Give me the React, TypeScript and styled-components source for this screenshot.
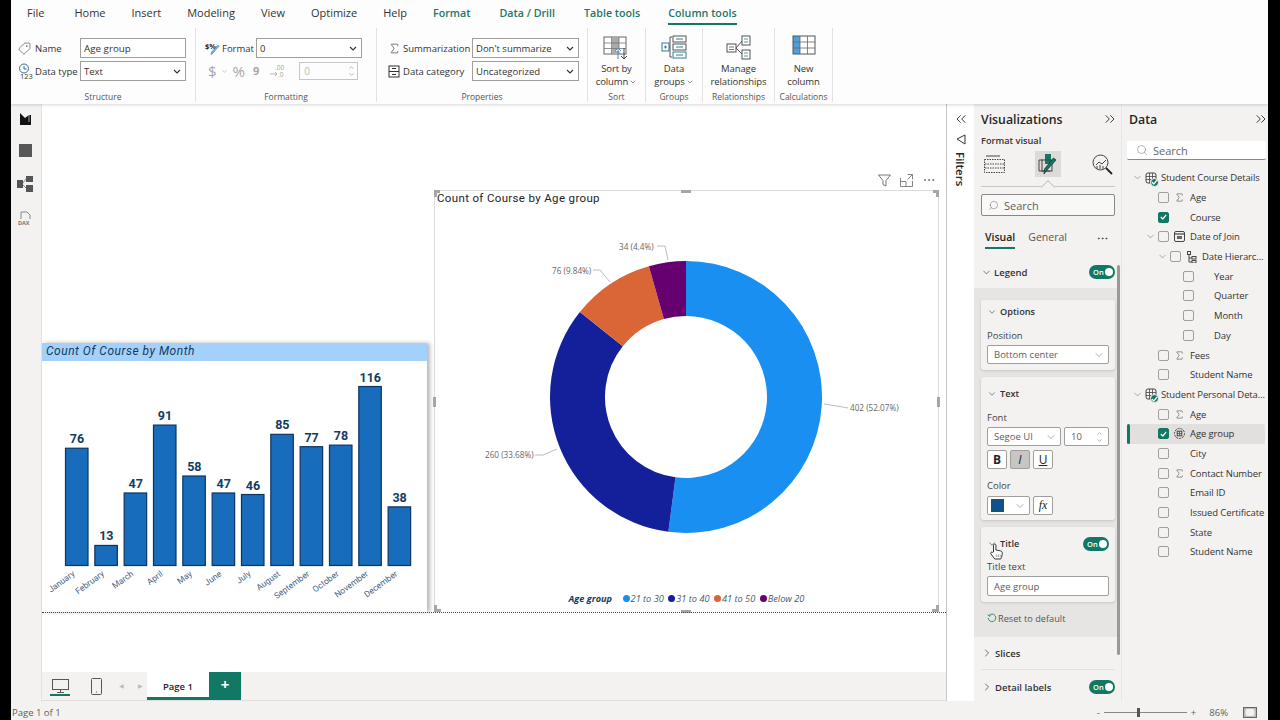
import React from 'react';
import styled, { createGlobalStyle } from 'styled-components';
import {
  ChevronDown,
  ChevronRight,
  ChevronUp,
  ChevronsLeft,
  ChevronsRight,
  Ellipsis,
  Search,
  Sigma,
  Tag,
} from 'lucide-react';

const UI_FONT = `"Open Sans", "Noto Sans", sans-serif`;
const DIN_FONT = `Roboto, "Liberation Sans", sans-serif`;
const GREEN = '#117865';

const SELECT_ARROW = `url("data:image/svg+xml,%3Csvg xmlns='http://www.w3.org/2000/svg' width='8' height='5'%3E%3Cpath d='M1 1l3 3 3-3' fill='none' stroke='%23333' stroke-width='1.1'/%3E%3C/svg%3E")`;

const GlobalStyle = createGlobalStyle`
  html, body { margin: 0; padding: 0; background: #000; }
  body { font-family: ${UI_FONT}; font-size: 10px; color: #252423; }
  * { box-sizing: border-box; }
  svg { display: block; }
`;

/* ------------------------------- Page shell ------------------------------- */

const Screen = styled.div`
  width: 1280px;
  height: 720px;
  overflow: hidden;
  background: #000;
  padding: 0 12px 0 11px;
`;

const Main = styled.div`
  height: 100%;
  display: flex;
  flex-direction: column;
  background: #f3f2f1;
`;

const Middle = styled.div`
  flex: 1;
  min-height: 0;
  display: flex;
`;

/* --------------------------------- Ribbon --------------------------------- */

const Ribbon = styled.header`
  height: 104px;
  flex: none;
  background: #fdfdfd;
  box-shadow: 0 1px 3px rgba(0, 0, 0, 0.16);
  position: relative;
  z-index: 2;
`;

const TabRow = styled.nav`
  height: 27px;
  display: flex;
  gap: 26px;
  padding-left: 16px;
  align-items: flex-start;
`;

const RibbonTab = styled.div<{ $context?: boolean; $active?: boolean; $after?: number }>`
  height: 25px;
  line-height: 26px;
  font-size: ${(p) => (p.$context ? 10.7 : 11)}px;
  color: ${(p) => (p.$context ? '#1c7767' : '#333')};
  font-weight: ${(p) => (p.$context ? 600 : 400)};
  margin-right: ${(p) => p.$after ?? 0}px;
  border-bottom: 2px solid ${(p) => (p.$active ? GREEN : 'transparent')};
`;

const GroupRow = styled.div`
  display: flex;
  height: 77px;
  padding: 1px 0 2px;
`;

const Group = styled.section<{ $width: number }>`
  width: ${(p) => p.$width}px;
  display: flex;
  flex-direction: column;
  border-right: 1px solid #e4e2e0;
`;

const GroupBody = styled.div<{ $left?: number }>`
  flex: 1;
  padding: 10px 0 0 ${(p) => p.$left ?? 0}px;
  display: flex;
  flex-direction: column;
  gap: 3px;
`;

const GroupLabel = styled.div`
  height: 14px;
  line-height: 17px;
  text-align: center;
  font-size: 8.5px;
  color: #555;
`;

const FieldRow = styled.div`
  display: flex;
  align-items: center;
  height: 20px;
`;

const IconSlot = styled.span<{ $width: number }>`
  width: ${(p) => p.$width}px;
  flex: none;
  display: flex;
  align-items: center;
`;

const FieldLabel = styled.span<{ $width: number }>`
  width: ${(p) => p.$width}px;
  flex: none;
  font-size: 9.5px;
  color: #333;
  white-space: nowrap;
`;

const RibbonInput = styled.input<{ $width: number }>`
  width: ${(p) => p.$width}px;
  height: 20px;
  border: 1px solid #a19f9d;
  padding: 0 3px;
  font: 9.8px ${UI_FONT};
  color: #333;
  background: #fff;
  outline: none;
`;

const RibbonSelect = styled.select<{ $width: number }>`
  width: ${(p) => p.$width}px;
  height: 20px;
  border: 1px solid #a19f9d;
  border-radius: 0;
  padding-left: 3px;
  font: 9.5px ${UI_FONT};
  color: #333;
  outline: none;
  appearance: none;
  background: #fff ${SELECT_ARROW} no-repeat right 4px center;
`;

const MutedGlyph = styled.span<{ $size?: number; $gap?: number; $bold?: boolean }>`
  color: #a8a6a4;
  font-size: ${(p) => p.$size ?? 14}px;
  font-weight: ${(p) => (p.$bold ? 700 : 400)};
  line-height: 18px;
  margin-right: ${(p) => p.$gap ?? 0}px;
`;

const MutedRow = styled(FieldRow)`
  padding-left: 3px;
  color: #a8a6a4;
`;

const MutedCaret = styled.span`
  margin-right: 5px;
`;

const DisabledSpin = styled.div`
  width: 59px;
  height: 18px;
  margin-left: 14px;
  border: 1px solid #c8c6c4;
  color: #bbb;
  padding-left: 4px;
  font-size: 10px;
  line-height: 16px;
  display: flex;
  justify-content: space-between;
`;

const SpinArrows = styled.span`
  display: flex;
  flex-direction: column;
  justify-content: center;
  padding-right: 2px;
  color: #888;
`;

const BigButton = styled.div`
  flex: 1;
  display: flex;
  flex-direction: column;
  align-items: center;
  padding-top: 7px;
  font-size: 9.5px;
  letter-spacing: -0.1px;
  line-height: 13px;
  color: #333;
  text-align: center;
`;

const BigIcon = styled.div`
  height: 24px;
  margin-bottom: 3px;
`;

const BigLine = styled.span`
  display: flex;
  align-items: center;
  gap: 1px;
  white-space: nowrap;
`;

/* -------------------------------- Left rail ------------------------------- */

const Rail = styled.aside`
  width: 31px;
  flex: none;
  display: flex;
  flex-direction: column;
  align-items: center;
  padding: 9px 2px 0 0;
  gap: 19px;
  border-right: 1px solid #e4e2e0;
  margin-bottom: -1px;
`;

/* --------------------------------- Canvas --------------------------------- */

const CanvasColumn = styled.div`
  width: 905px;
  flex: none;
  display: flex;
  flex-direction: column;
  border-right: 1px solid #c8c6c4;
`;

const Canvas = styled.main`
  flex: 1;
  position: relative;
  background: #fff;
`;

const PageEdge = styled.div`
  position: absolute;
  left: 0;
  right: 0;
  top: 508px;
  border-top: 1px dotted #444;
`;

const BarVisual = styled.div`
  position: absolute;
  left: 0;
  top: 239px;
  width: 385px;
  height: 269px;
  background: #fff;
  box-shadow: 3px 0 4px rgba(0, 0, 0, 0.28);
`;

const BarTitle = styled.div`
  height: 18px;
  padding-left: 4px;
  background: #a3d1fb;
  font: italic 400 12px/16px ${DIN_FONT};
  letter-spacing: 0.5px;
  color: #123c63;
`;

const PieVisual = styled.div`
  position: absolute;
  left: 392px;
  top: 86px;
  width: 505px;
  height: 422px;
  background: #fff;
  border: 1px solid #dcdcdc;
  border-bottom: 0;
  display: flex;
  flex-direction: column;
`;

const PieTitle = styled.div`
  height: 16px;
  padding-left: 2px;
  font: 400 11.5px/15px ${DIN_FONT};
  letter-spacing: 0.35px;
  color: #252423;
`;

const Legend = styled.div`
  display: flex;
  justify-content: center;
  align-items: center;
  gap: 4.5px;
  height: 16px;
  margin-top: -1px;
  font-size: 9.2px;
  font-style: italic;
  color: #4a5a6a;
`;

const LegendTitle = styled.span`
  font-weight: 700;
  color: #123c63;
  margin-right: 6px;
`;

const LegendItem = styled.span`
  display: flex;
  align-items: center;
  gap: 1px;
`;

const LegendDot = styled.span<{ $color: string }>`
  width: 7px;
  height: 7px;
  border-radius: 50%;
  background: ${(p) => p.$color};
`;

const VisualHeader = styled.div`
  position: absolute;
  top: -18px;
  right: 2px;
  display: flex;
  gap: 9px;
  align-items: center;
  color: #666;
`;

const Handle = styled.span<{ $x: string; $y: string; $w: number; $h: number }>`
  position: absolute;
  ${(p) => p.$x};
  ${(p) => p.$y};
  width: ${(p) => p.$w}px;
  height: ${(p) => p.$h}px;
  background: #a6a6a6;
`;

/* -------------------------------- Page tabs ------------------------------- */

const PageBar = styled.footer`
  height: 29px;
  flex: none;
  display: flex;
  align-items: stretch;
  border-bottom: 1px solid #e1dfdd;
`;

const ViewButton = styled.div<{ $active?: boolean; $width: number }>`
  width: ${(p) => p.$width}px;
  display: flex;
  justify-content: center;
  align-items: center;
  position: relative;
  &::after {
    content: '';
    display: ${(p) => (p.$active ? 'block' : 'none')};
    position: absolute;
    left: 8px;
    right: 8px;
    bottom: 4px;
    height: 2px;
    background: ${GREEN};
  }
`;

const PagerArrows = styled.div`
  display: flex;
  align-items: center;
  gap: 14px;
  padding: 0 4px 0 5px;
  color: #bbb;
  font-size: 6px;
`;

const PageTab = styled.div`
  width: 62px;
  background: #fff;
  border-bottom: 3px solid ${GREEN};
  text-align: center;
  font-size: 9.5px;
  font-weight: 600;
  line-height: 29px;
  color: #252423;
`;

const AddPage = styled.div`
  width: 32px;
  background: ${GREEN};
  color: #fff;
  text-align: center;
  font-size: 15px;
  font-weight: 700;
  line-height: 25px;
`;

/* ------------------------------ Filters strip ----------------------------- */

const FilterStrip = styled.aside`
  width: 27px;
  flex: none;
  background: #fff;
  display: flex;
  flex-direction: column;
  align-items: center;
  padding-top: 7px;
  color: #252423;
`;

const FilterGap = styled.div`
  height: 7px;
`;

const FilterWord = styled.div`
  writing-mode: vertical-rl;
  font-size: 11.5px;
  font-weight: 600;
  margin-top: 7px;
`;

/* ---------------------------- Visualizations pane ------------------------- */

const VizPane = styled.aside`
  width: 148px;
  flex: none;
  position: relative;
  overflow: hidden;
  padding: 5px 7px 0;
  box-shadow: inset -1px 0 0 #e8e6e4;
  margin-right: 0;
`;

const PaneHeader = styled.div`
  height: 20px;
  display: flex;
  justify-content: space-between;
  align-items: center;
  font-size: 12.3px;
  font-weight: 600;
  color: #252423;
  svg {
    margin-right: -3px;
  }
`;

const FormatCaption = styled.div`
  margin-top: 6px;
  height: 12px;
  line-height: 12px;
  font-size: 9.2px;
  font-weight: 600;
  color: #333;
`;

const ModeRow = styled.div`
  margin-top: 4px;
  height: 26px;
  display: grid;
  grid-template-columns: 26px 26px 26px;
  justify-content: space-between;
`;

const ModeButton = styled.div<{ $active?: boolean }>`
  display: flex;
  justify-content: center;
  align-items: center;
  background: ${(p) => (p.$active ? '#dcdbd9' : 'transparent')};
`;

const Notched = styled.div`
  margin-top: 9px;
  height: 0;
  border-top: 1px solid #c8c6c4;
  position: relative;
  &::after {
    content: '';
    position: absolute;
    left: 62px;
    top: -5px;
    width: 9px;
    height: 9px;
    background: #f3f2f1;
    border-left: 1px solid #c8c6c4;
    border-top: 1px solid #c8c6c4;
    transform: rotate(45deg);
  }
`;

const SearchBox = styled.div`
  margin-top: 7px;
  height: 22px;
  border: 1px solid #8a8886;
  border-radius: 2px;
  background: #f8f8f7;
  display: flex;
  align-items: center;
  gap: 5px;
  padding-left: 6px;
  font-size: 11px;
  color: #605e5c;
`;

const SubTabs = styled.div`
  margin-top: 13px;
  height: 20px;
  display: flex;
  align-items: flex-start;
  padding-left: 4px;
  gap: 13px;
  font-size: 10.5px;
`;

const SubTab = styled.span<{ $active?: boolean }>`
  height: 20px;
  line-height: 17px;
  font-weight: ${(p) => (p.$active ? 600 : 400)};
  color: ${(p) => (p.$active ? '#252423' : '#555')};
  border-bottom: 2px solid ${(p) => (p.$active ? GREEN : 'transparent')};
`;

const SubMore = styled.span`
  margin-left: auto;
  margin-right: 6px;
  display: flex;
  height: 18px;
  align-items: center;
  color: #444;
`;

const SectionRow = styled.div<{ $height: number; $line?: boolean; $top?: number }>`
  height: ${(p) => p.$height}px;
  margin-top: ${(p) => p.$top ?? 0}px;
  display: flex;
  align-items: center;
  gap: 2px;
  font-size: 9.5px;
  font-weight: 600;
  color: #333;
  border-bottom: ${(p) => (p.$line ? '1px solid #e4e2e0' : '0')};
`;

const SectionLabel = styled.span`
  flex: 1;
`;

const Toggle = styled.span`
  width: 26px;
  height: 14px;
  border-radius: 7px;
  background: ${GREEN};
  color: #fff;
  font-size: 7.5px;
  font-weight: 600;
  display: flex;
  align-items: center;
  justify-content: space-between;
  padding: 0 2px 0 4px;
  &::after {
    content: '';
    width: 8px;
    height: 8px;
    border-radius: 50%;
    background: #fff;
  }
`;

const SectionArea = styled.div`
  margin: 8px -2px 0 -7px;
  height: 349px;
  background: #e6e5e3;
  padding: 12px 2px 0 7px;
  display: flex;
  flex-direction: column;
  gap: 7px;
`;

const Card = styled.div<{ $height: number }>`
  height: ${(p) => p.$height}px;
  flex: none;
  background: #f3f2f1;
  border-radius: 3px;
  box-shadow: 0 1px 3px rgba(0, 0, 0, 0.14);
  padding: 4px 6px 0;
`;

const CardHeader = styled.div<{ $top?: number }>`
  height: 15px;
  margin-top: ${(p) => p.$top ?? 0}px;
  display: flex;
  align-items: center;
  gap: 3px;
  font-size: 9.2px;
  font-weight: 600;
  color: #333;
`;

const CardLabel = styled.div<{ $top: number }>`
  margin-top: ${(p) => p.$top}px;
  height: 12px;
  line-height: 12px;
  font-size: 9.5px;
  color: #444;
`;

const Control = styled.div<{ $width?: number; $top?: number; $tall?: boolean; $swatch?: boolean }>`
  width: ${(p) => (p.$width ? `${p.$width}px` : '100%')};
  height: ${(p) => (p.$tall ? 20 : 19)}px;
  margin-top: ${(p) => p.$top ?? 0}px;
  background: #fff;
  border: 1px solid #a19f9d;
  border-radius: 2px;
  display: flex;
  align-items: center;
  justify-content: space-between;
  padding: 0 3px 0 ${(p) => (p.$swatch ? 3 : 6)}px;
  font-size: 9.5px;
  color: #605e5c;
  flex: none;
`;

const ControlRow = styled.div<{ $top?: number }>`
  display: flex;
  gap: 3px;
  margin-top: ${(p) => p.$top ?? 0}px;
`;

const StyleButton = styled.div<{ $active?: boolean }>`
  width: 20px;
  height: 19px;
  border: 1px solid #a19f9d;
  border-radius: 2px;
  background: ${(p) => (p.$active ? '#c8c6c4' : '#fff')};
  display: flex;
  align-items: center;
  justify-content: center;
  font-size: 12px;
  color: #252423;
`;

const Swatch = styled.span`
  width: 13px;
  height: 13px;
  background: #12508a;
`;

const FxMark = styled.span`
  font: italic 12px 'Liberation Serif', serif;
`;

const TitleHeader = styled(CardHeader)`
  justify-content: space-between;
`;

const TitleLabel = styled.span`
  display: flex;
  gap: 3px;
  align-items: center;
`;

const ResetRow = styled.div`
  padding-left: 6px;
  display: flex;
  align-items: center;
  gap: 1px;
  height: 18px;
  font-size: 9.2px;
  color: #555;
`;

const Scrollbar = styled.span`
  position: absolute;
  left: 143px;
  top: 161px;
  width: 3px;
  height: 390px;
  border-radius: 2px;
  background: #999;
`;

const HandCursor = styled.span`
  position: absolute;
  left: 16px;
  top: 439px;
`;

/* -------------------------------- Data pane ------------------------------- */

const DataPane = styled.aside`
  flex: 1;
  padding: 5px 2px 0 5px;
  overflow: hidden;
`;

const DataHeader = styled(PaneHeader)`
  padding: 0 0 0 2px;
`;

const DataSearch = styled.div`
  margin: 12px 0 0;
  height: 19px;
  width: 139px;
  background: #fff;
  border-radius: 2px;
  border-bottom: 1px solid #8a8886;
  display: flex;
  align-items: center;
  gap: 5px;
  padding-left: 9px;
  font-size: 11px;
  color: #666;
`;

const Tree = styled.div`
  margin-top: 8px;
`;

const TreeRow = styled.div<{ $indent: number; $selected?: boolean }>`
  height: 19.7px;
  width: 138px;
  display: flex;
  align-items: center;
  padding-left: ${(p) => p.$indent}px;
  position: relative;
  font-size: 9.5px;
  letter-spacing: -0.12px;
  color: #333;
  white-space: nowrap;
  background: ${(p) => (p.$selected ? '#e1e0de' : 'transparent')};
  border-radius: 2px;
  &::before {
    content: '';
    display: ${(p) => (p.$selected ? 'block' : 'none')};
    position: absolute;
    left: 0;
    top: 0;
    bottom: 0;
    width: 3px;
    border-radius: 2px;
    background: ${GREEN};
  }
`;

const Caret = styled.span`
  width: 14px;
  flex: none;
  display: flex;
  justify-content: center;
  color: #555;
`;

const CheckBox = styled.span<{ $on?: boolean }>`
  width: 11px;
  height: 11px;
  margin: 0 0.5px;
  flex: none;
  border-radius: 2px;
  border: 1px solid ${(p) => (p.$on ? GREEN : '#a19f9d')};
  background: ${(p) => (p.$on ? GREEN : 'transparent')};
  display: flex;
  align-items: center;
  justify-content: center;
`;

const RowIcon = styled.span<{ $width: number }>`
  width: ${(p) => p.$width}px;
  flex: none;
  display: flex;
  justify-content: center;
  align-items: center;
  color: #444;
  position: relative;
`;

const TableLabel = styled.span`
  margin-left: 3px;
`;

const ModelBadge = styled.span`
  position: absolute;
  left: 6px;
  top: 6px;
  width: 9px;
  height: 9px;
  border-radius: 50%;
  background: ${GREEN};
  border: 1px solid #f3f2f1;
  display: flex;
  align-items: center;
  justify-content: center;
`;

/* ------------------------------- Status bar ------------------------------- */

const StatusBar = styled.footer`
  height: 19px;
  flex: none;
  display: flex;
  align-items: center;
  padding: 3px 11px 0 1px;
  font-size: 9.5px;
  color: #605e5c;
`;

const StatusText = styled.span`
  flex: 1;
`;

const ZoomTrack = styled.span`
  width: 83px;
  height: 1px;
  margin: 0 4px;
  background: #8a8886;
  position: relative;
`;

const ZoomThumb = styled.span`
  position: absolute;
  left: 33px;
  top: -4px;
  width: 3px;
  height: 9px;
  background: #555;
`;

const ZoomValue = styled.span`
  margin: 0 15px 0 13px;
`;

/* ---------------------------------- Icons --------------------------------- */

const TinyChevron = ({ size = 8 }: { size?: number }) => <ChevronDown size={size} strokeWidth={1.6} />;

const MirroredTag = styled(Tag)`
  transform: scaleX(-1);
`;

const MirroredSearch = styled(Search)`
  transform: scaleX(-1);
`;

const DataTypeIcon = () => (
  <svg width="15" height="17" viewBox="0 0 15 17">
    <circle cx="6" cy="5.5" r="4.5" fill="none" stroke="#2f6f8f" strokeWidth="1" />
    <path d="M6 3v3h2.5" fill="none" stroke="#2f6f8f" strokeWidth="1" />
    <text x="2" y="16" fontSize="7.5" fill="#333" fontFamily={UI_FONT}>123</text>
  </svg>
);

const FormatIcon = () => (
  <svg width="16" height="15" viewBox="0 0 16 15">
    <text x="0" y="8" fontSize="7.5" fontWeight="700" fill="#222" fontFamily={UI_FONT}>$%</text>
    <path d="M14 5 8 12l-2 1.5.5-2.4 6-6.6z" fill="#8fb7d3" stroke="#4c7f9f" strokeWidth=".7" />
  </svg>
);

const DecimalIcon = () => (
  <svg width="16" height="16" viewBox="0 0 16 16">
    <text x="6" y="7" fontSize="6.5" fill="#a8a6a4" fontFamily={UI_FONT}>.00</text>
    <text x="9" y="14" fontSize="6.5" fill="#a8a6a4" fontFamily={UI_FONT}>.0</text>
    <path d="M1 11h7M6 9l2 2-2 2" fill="none" stroke="#a8a6a4" strokeWidth=".8" />
  </svg>
);

const CategoryIcon = () => (
  <svg width="12" height="13" viewBox="0 0 12 13">
    <rect x="1" y="1" width="10" height="11" fill="none" stroke="#333" />
    <path d="M1 6.5h10M4 3.5h4M4 9.5h4" stroke="#333" />
  </svg>
);

const SortIcon = () => (
  <svg width="27" height="26" viewBox="0 0 27 26">
    <rect x="1" y="2" width="22" height="17" fill="#fff" stroke="#666" />
    <rect x="9" y="2" width="7" height="17" fill="#aaa" />
    <path d="M1 8h22M1 13.500h22M8.500 2v17M16 2v17" stroke="#777" strokeWidth=".8" />
    <path d="M15 24V13m-3 3 3-3 3 3" fill="#fff" stroke="#4a90c0" />
    <path d="M21 13v11m-3-3 3 3 3-3" fill="none" stroke="#444" />
  </svg>
);

const GroupsIcon = () => (
  <svg width="26" height="24" viewBox="0 0 26 24">
    <rect x="1" y="8" width="7" height="8" fill="#fff" stroke="#2f7f8f" />
    <path d="M3 12h3M4.500 10.500v3" stroke="#2f7f8f" />
    <path d="M11 2h-2v20h2M8 12h1" fill="none" stroke="#555" />
    <rect x="12" y="1" width="13" height="6" fill="#fff" stroke="#555" />
    <rect x="12" y="9" width="13" height="6" fill="#fff" stroke="#555" />
    <rect x="12" y="17" width="13" height="6" fill="#fff" stroke="#2f7f8f" />
    <path d="M15 4h7M15 12h7M15 20h7" stroke="#2f7f8f" />
  </svg>
);

const RelationshipsIcon = () => (
  <svg width="26" height="25" viewBox="0 0 26 25">
    <rect x="1" y="9" width="9" height="8" fill="#fff" stroke="#555" />
    <path d="M3 12h5M3 14.500h5" stroke="#555" strokeWidth=".8" />
    <rect x="16" y="1" width="8" height="9" fill="#fff" stroke="#555" />
    <rect x="16" y="15" width="8" height="9" fill="#fff" stroke="#555" />
    <path d="M18 4h4M18 7h4M18 18h4M18 21h4" stroke="#2f7f8f" strokeWidth=".8" />
    <path d="M16 6l-6 7 6 6" fill="none" stroke="#555" />
  </svg>
);

const NewColumnIcon = () => (
  <svg width="24" height="20" viewBox="0 0 24 20">
    <rect x="1" y="1" width="7" height="18" fill="#4f9fdc" />
    <rect x="1" y="1" width="22" height="18" fill="none" stroke="#555" />
    <path d="M1 7h22M1 13h22M8 1v18M15.500 1v18" stroke="#666" strokeWidth=".8" />
  </svg>
);

const ReportIcon = () => (
  <svg width="11" height="12" viewBox="0 0 11 12">
    <path d="M0 0l5 5 4-3h2v10H0z" fill="#111" />
    <path d="M9 1v8" stroke="#fff" strokeWidth=".6" />
  </svg>
);

const TableIcon = () => (
  <svg width="13" height="13" viewBox="0 0 13 13">
    <rect width="13" height="13" fill="#575757" />
  </svg>
);

const ModelIcon = () => (
  <svg width="16" height="16" viewBox="0 0 16 16">
    <rect x="0" y="4" width="6" height="8" fill="#555" />
    <rect x="9" y="0" width="7" height="6" fill="#555" />
    <rect x="9" y="9" width="7" height="7" fill="#555" />
    <path d="M6 7l3-4M6 9l3 3" stroke="#888" />
  </svg>
);

const DaxIcon = () => (
  <svg width="15" height="15" viewBox="0 0 15 15">
    <path d="M3 8V1h6l3 3v4" fill="none" stroke="#888" />
    <text x="0" y="13.500" fontSize="5.500" fontWeight="700" fill="#777" fontFamily={UI_FONT}>DAX</text>
  </svg>
);

const FunnelLine = () => (
  <svg width="13" height="13" viewBox="0 0 13 13">
    <path d="M.5 1h12L8 6.500V12L5 10.500v-4z" fill="none" stroke="#666" strokeWidth=".9" />
  </svg>
);

const FocusIcon = () => (
  <svg width="13" height="13" viewBox="0 0 13 13">
    <path d="M.5 4V12.500H12.500V7M.5 7.500H6V12.500M7.500.5H12.500V5.500M12.500.5 7.500 5.500" fill="none" stroke="#777" strokeWidth=".9" />
  </svg>
);

const SideFunnel = () => (
  <svg width="10" height="11" viewBox="0 0 10 11">
    <path d="M1 5l8-4v9z" fill="none" stroke="#333" />
  </svg>
);

const FieldsGridIcon = () => (
  <svg width="21" height="19" viewBox="0 0 21 19">
    <path d="M2 1h14" stroke="#444" />
    <rect x=".5" y="4.500" width="20" height="13" fill="none" stroke="#444" strokeDasharray="1.500 1" />
    <path d="M1 9h19M1 13h19" stroke="#444" strokeDasharray="1.500 1" />
  </svg>
);

const FormatPaintIcon = () => (
  <svg width="20" height="22" viewBox="0 0 20 22">
    <rect x="7" y="1" width="6" height="10" fill={GREEN} />
    <path d="M5 7H1v11h11" fill="none" stroke="#444" />
    <rect x="4" y="7" width="10" height="11" fill="none" stroke="#444" />
    <path d="M18 7 9 17l-3 4 .5-5 9-11z" fill={GREEN} stroke="#222" strokeWidth=".7" />
  </svg>
);

const AnalyticsIcon = () => (
  <svg width="21" height="21" viewBox="0 0 21 21">
    <circle cx="8.500" cy="8.500" r="7.500" fill="none" stroke="#444" />
    <path d="M4 11l3-3 3 2 4-4M5 12v3M8 11v4M11 12v3" fill="none" stroke="#444" />
    <path d="M14 14l6 6" stroke="#222" strokeWidth="1.800" />
  </svg>
);

const GridGlyph = () => (
  <svg width="12" height="12" viewBox="0 0 12 12">
    <rect x="1" y="1" width="10" height="10" rx="2" fill="none" stroke="#444" />
    <path d="M1 4.500h10M1 7.500h10M4.500 1v10M7.500 1v10" stroke="#444" strokeWidth=".8" />
  </svg>
);

const CalendarGlyph = () => (
  <svg width="11" height="11" viewBox="0 0 11 11">
    <rect x=".5" y=".5" width="10" height="10" rx="1.500" fill="none" stroke="#444" />
    <path d="M.5 3h10" stroke="#444" strokeWidth="1.200" />
    <rect x="3" y="5" width="5" height="3" fill="#666" />
  </svg>
);

const HierarchyGlyph = () => (
  <svg width="10" height="12" viewBox="0 0 10 12">
    <rect x=".5" y=".5" width="3" height="3" fill="none" stroke="#444" />
    <path d="M2 4v7h3M2 7h3" fill="none" stroke="#444" />
    <rect x="5" y="5.500" width="4" height="2.500" fill="none" stroke="#444" />
    <rect x="5" y="9.500" width="4" height="2.500" fill="none" stroke="#444" />
  </svg>
);

const GroupGlyph = () => (
  <svg width="11" height="11" viewBox="0 0 11 11">
    <circle cx="5.500" cy="5.500" r="5" fill="none" stroke="#444" strokeDasharray="2 1" />
    <rect x="3.200" y="3.200" width="4.600" height="4.600" fill="none" stroke="#444" />
    <path d="M5.500 3.200v4.600M3.200 5.500h4.600" stroke="#444" strokeWidth=".7" />
  </svg>
);

const Tick = () => (
  <svg width="7" height="6" viewBox="0 0 7 6">
    <path d="M.8 3l2 2L6.200.8" fill="none" stroke="#fff" strokeWidth="1.200" />
  </svg>
);

const ResetGlyph = () => (
  <svg width="10" height="10" viewBox="0 0 10 10">
    <path d="M2 2.500A3.800 3.800 0 1 1 1.200 5" fill="none" stroke="#3d8f7f" />
    <path d="M.8 1.500 2 3.200l1.800-.6" fill="none" stroke="#3d8f7f" />
  </svg>
);

const Hand = () => (
  <svg width="13" height="17" viewBox="0 0 13 17">
    <path
      d="M3.500 9V2.300a1.200 1.200 0 0 1 2.400 0V7l4.300.8c1.300.3 2.100 1 2.100 2.300 0 2-.6 3.800-1.600 5.900H4.800L1 11c-.9-1.100.4-2.600 1.500-1.600z"
      fill="#fff"
      stroke="#222"
      strokeWidth=".9"
    />
    <path d="M6.300 11.500V14M8.300 11.500V14M10.200 11.500V14" stroke="#444" strokeWidth=".5" />
  </svg>
);

/* -------------------------------- Chart data ------------------------------ */

const months: [string, number][] = [
  ['January', 76], ['February', 13], ['March', 47], ['April', 91],
  ['May', 58], ['June', 47], ['July', 46], ['August', 85],
  ['September', 77], ['October', 78], ['November', 116], ['December', 38],
];

const slices = [
  { label: '21 to 30', value: 52.07, color: '#1a8ff2' },
  { label: '31 to 40', value: 33.68, color: '#13209a' },
  { label: '41 to 50', value: 9.85, color: '#da6537' },
  { label: 'Below 20', value: 4.4, color: '#660070' },
];

const polar = (r: number, pct: number) => {
  const a = (pct / 100) * Math.PI * 2;
  return [251 + r * Math.sin(a), 190 - r * Math.cos(a)];
};

const slicePath = (from: number, to: number) => {
  const [x1, y1] = polar(136, from);
  const [x2, y2] = polar(136, to);
  const [x3, y3] = polar(81, to);
  const [x4, y4] = polar(81, from);
  const big = to - from > 50 ? 1 : 0;
  return `M${x1} ${y1}A136 136 0 ${big} 1 ${x2} ${y2}L${x3} ${y3}A81 81 0 ${big} 0 ${x4} ${y4}Z`;
};

const BarChart = () => (
  <svg width="385" height="251" viewBox="0 0 385 251">
    {months.map(([name, value], i) => {
      const x = 23.5 + i * 29.33;
      const h = value * 1.543;
      const top = 204.5 - h;
      return (
        <g key={name}>
          <rect x={x} y={top} width={22.5} height={h} fill="#176cbb" stroke="#0e3560" strokeWidth="1.2" />
          <text x={x + 11.5} y={top - 5} textAnchor="middle" fontFamily={DIN_FONT} fontSize="12.500" fontWeight="700" fill="#123c63">
            {value}
          </text>
          <text
            x={x + 10}
            y={214}
            textAnchor="end"
            fontFamily={DIN_FONT}
            fontSize="8.500"
            fill="#47637f"
            transform={`rotate(-36 ${x + 10} 214)`}
          >
            {name}
          </text>
        </g>
      );
    })}
  </svg>
);

const PieLabels: { text: string; x: number; y: number; line: string }[] = [
  { text: '402 (52.07%)', x: 415, y: 204, line: '389,197 402,199 413,201' },
  { text: '260 (33.68%)', x: 50, y: 251, line: '100,248 108,248 122,242' },
  { text: '76 (9.84%)', x: 117, y: 67, line: '158,63 165,63 175,75' },
  { text: '34 (4.4%)', x: 184, y: 43, line: '222,39 230,39 233,53' },
];

const DonutChart = () => {
  let run = 0;
  return (
    <svg width="503" height="384" viewBox="0 0 503 384">
      {slices.map((s) => {
        const d = slicePath(run, run + s.value);
        run += s.value;
        return <path key={s.label} d={d} fill={s.color} />;
      })}
      {PieLabels.map((l) => (
        <g key={l.text}>
          <polyline points={l.line} fill="none" stroke="#bbb" strokeWidth="1" />
          <text x={l.x} y={l.y} fontFamily={UI_FONT} fontSize="8.200" fill="#666">{l.text}</text>
        </g>
      ))}
    </svg>
  );
};

type Row = {
  label: string;
  indent: number;
  caret?: boolean;
  table?: boolean;
  check?: boolean;
  icon?: 'sum' | 'calendar' | 'hierarchy' | 'group';
  iconWidth?: number;
  selected?: boolean;
};

const field = (label: string, extra: Partial<Row> = {}): Row => ({ label, indent: 30, check: false, iconWidth: 21, ...extra });
const leaf = (label: string): Row => ({ label, indent: 55, check: false, iconWidth: 20 });

const rows: Row[] = [
  { label: 'Student Course Details', indent: 3, caret: true, table: true },
  field('Age', { icon: 'sum' }),
  field('Course', { check: true }),
  field('Date of Join', { indent: 16, caret: true, icon: 'calendar' }),
  field('Date Hierarc...', { indent: 28, caret: true, icon: 'hierarchy' }),
  leaf('Year'),
  leaf('Quarter'),
  leaf('Month'),
  leaf('Day'),
  field('Fees', { icon: 'sum' }),
  field('Student Name'),
  { label: 'Student Personal Deta...', indent: 3, caret: true, table: true },
  field('Age', { icon: 'sum' }),
  field('Age group', { check: true, icon: 'group', selected: true }),
  field('City'),
  field('Contact Number', { icon: 'sum' }),
  field('Email ID'),
  field('Issued Certificate'),
  field('State'),
  field('Student Name'),
];

const RowGlyph = ({ icon }: { icon?: Row['icon'] }) => {
  if (icon === 'sum') return <Sigma size={11} strokeWidth={1.2} />;
  if (icon === 'calendar') return <CalendarGlyph />;
  if (icon === 'hierarchy') return <HierarchyGlyph />;
  if (icon === 'group') return <GroupGlyph />;
  return null;
};

const DataTree = () => (
  <Tree>
    {rows.map((r, i) => (
      <TreeRow key={i} $indent={r.indent} $selected={r.selected}>
        {r.caret && <Caret><ChevronDown size={11} strokeWidth={1} /></Caret>}
        {r.table ? (
          <RowIcon $width={14}>
            <GridGlyph />
            <ModelBadge><Tick /></ModelBadge>
          </RowIcon>
        ) : (
          <CheckBox $on={r.check}>{r.check && <Tick />}</CheckBox>
        )}
        {!r.table && (
          <RowIcon $width={r.iconWidth ?? 21}>
            <RowGlyph icon={r.icon} />
          </RowIcon>
        )}
        {r.table ? <TableLabel>{r.label}</TableLabel> : <span>{r.label}</span>}
      </TreeRow>
    ))}
  </Tree>
);

/* ----------------------------------- App ---------------------------------- */

export default function App() {
  return (
    <>
      <GlobalStyle />
      <Screen>
        <Main>
          <Ribbon>
            <TabRow>
              <RibbonTab $after={4}>File</RibbonTab>
              <RibbonTab>Home</RibbonTab>
              <RibbonTab>Insert</RibbonTab>
              <RibbonTab>Modeling</RibbonTab>
              <RibbonTab>View</RibbonTab>
              <RibbonTab>Optimize</RibbonTab>
              <RibbonTab>Help</RibbonTab>
              <RibbonTab $context $after={3}>Format</RibbonTab>
              <RibbonTab $context $after={3}>Data / Drill</RibbonTab>
              <RibbonTab $context $after={2}>Table tools</RibbonTab>
              <RibbonTab $context $active>Column tools</RibbonTab>
            </TabRow>
            <GroupRow>
              <Group $width={185}>
                <GroupBody $left={7}>
                  <FieldRow>
                    <IconSlot $width={17}><MirroredTag size={13} strokeWidth={1} /></IconSlot>
                    <FieldLabel $width={45}>Name</FieldLabel>
                    <RibbonInput $width={106} defaultValue="Age group" />
                  </FieldRow>
                  <FieldRow>
                    <IconSlot $width={17}><DataTypeIcon /></IconSlot>
                    <FieldLabel $width={45}>Data type</FieldLabel>
                    <RibbonSelect $width={106} defaultValue="Text"><option>Text</option></RibbonSelect>
                  </FieldRow>
                </GroupBody>
                <GroupLabel>Structure</GroupLabel>
              </Group>
              <Group $width={181}>
                <GroupBody $left={9}>
                  <FieldRow>
                    <IconSlot $width={17}><FormatIcon /></IconSlot>
                    <FieldLabel $width={34}>Format</FieldLabel>
                    <RibbonSelect $width={106} defaultValue="0"><option>0</option></RibbonSelect>
                  </FieldRow>
                  <MutedRow>
                    <MutedGlyph $size={15} $gap={4}>$</MutedGlyph>
                    <MutedCaret><ChevronDown size={7} /></MutedCaret>
                    <MutedGlyph $size={15} $gap={8}>%</MutedGlyph>
                    <MutedGlyph $size={11} $bold $gap={10}>9</MutedGlyph>
                    <DecimalIcon />
                    <DisabledSpin>
                      0
                      <SpinArrows>
                        <ChevronUp size={7} />
                        <ChevronDown size={7} />
                      </SpinArrows>
                    </DisabledSpin>
                  </MutedRow>
                </GroupBody>
                <GroupLabel>Formatting</GroupLabel>
              </Group>
              <Group $width={211}>
                <GroupBody $left={11}>
                  <FieldRow>
                    <IconSlot $width={15}><Sigma size={13} strokeWidth={1.1} /></IconSlot>
                    <FieldLabel $width={69}>Summarization</FieldLabel>
                    <RibbonSelect $width={107} defaultValue="Don't summarize"><option>Don't summarize</option></RibbonSelect>
                  </FieldRow>
                  <FieldRow>
                    <IconSlot $width={15}><CategoryIcon /></IconSlot>
                    <FieldLabel $width={69}>Data category</FieldLabel>
                    <RibbonSelect $width={107} defaultValue="Uncategorized"><option>Uncategorized</option></RibbonSelect>
                  </FieldRow>
                </GroupBody>
                <GroupLabel>Properties</GroupLabel>
              </Group>
              <Group $width={58}>
                <BigButton>
                  <BigIcon><SortIcon /></BigIcon>
                  <BigLine>Sort by</BigLine>
                  <BigLine>column <TinyChevron /></BigLine>
                </BigButton>
                <GroupLabel>Sort</GroupLabel>
              </Group>
              <Group $width={57}>
                <BigButton>
                  <BigIcon><GroupsIcon /></BigIcon>
                  <BigLine>Data</BigLine>
                  <BigLine>groups <TinyChevron /></BigLine>
                </BigButton>
                <GroupLabel>Groups</GroupLabel>
              </Group>
              <Group $width={72}>
                <BigButton>
                  <BigIcon><RelationshipsIcon /></BigIcon>
                  <BigLine>Manage</BigLine>
                  <BigLine>relationships</BigLine>
                </BigButton>
                <GroupLabel>Relationships</GroupLabel>
              </Group>
              <Group $width={58}>
                <BigButton>
                  <BigIcon><NewColumnIcon /></BigIcon>
                  <BigLine>New</BigLine>
                  <BigLine>column</BigLine>
                </BigButton>
                <GroupLabel>Calculations</GroupLabel>
              </Group>
            </GroupRow>
          </Ribbon>

          <Middle>
            <Rail>
              <ReportIcon />
              <TableIcon />
              <ModelIcon />
              <DaxIcon />
            </Rail>

            <CanvasColumn>
              <Canvas>
                <BarVisual>
                  <BarTitle>Count Of Course by Month</BarTitle>
                  <BarChart />
                </BarVisual>
                <PieVisual>
                  <VisualHeader>
                    <FunnelLine />
                    <FocusIcon />
                    <Ellipsis size={14} strokeWidth={1.4} />
                  </VisualHeader>
                  <Handle $x="left: -1px" $y="top: -1px" $w={6} $h={3} />
                  <Handle $x="left: -1px" $y="top: -1px" $w={3} $h={7} />
                  <Handle $x="right: -1px" $y="top: -1px" $w={6} $h={3} />
                  <Handle $x="right: -1px" $y="top: -1px" $w={3} $h={7} />
                  <Handle $x="left: 246px" $y="top: -1px" $w={10} $h={3} />
                  <Handle $x="left: -2px" $y="top: 206px" $w={3} $h={10} />
                  <Handle $x="right: -2px" $y="top: 206px" $w={3} $h={10} />
                  <Handle $x="left: 246px" $y="bottom: -1px" $w={10} $h={3} />
                  <Handle $x="left: -1px" $y="bottom: 0" $w={7} $h={3} />
                  <Handle $x="left: -1px" $y="bottom: 0" $w={3} $h={7} />
                  <Handle $x="right: -1px" $y="bottom: 0" $w={7} $h={3} />
                  <Handle $x="right: -1px" $y="bottom: 0" $w={3} $h={7} />
                  <PieTitle>Count of Course by Age group</PieTitle>
                  <DonutChart />
                  <Legend>
                    <LegendTitle>Age group</LegendTitle>
                    {slices.map((s) => (
                      <LegendItem key={s.label}>
                        <LegendDot $color={s.color} />
                        {s.label}
                      </LegendItem>
                    ))}
                  </Legend>
                </PieVisual>
                <PageEdge />
              </Canvas>
              <PageBar>
                <ViewButton $active $width={36}>
                  <svg width="17" height="15" viewBox="0 0 17 15">
                    <rect x=".5" y=".5" width="16" height="10" fill="none" stroke="#555" />
                    <path d="M8.500 11v2M5 13.500h7" stroke="#555" />
                  </svg>
                </ViewButton>
                <ViewButton $width={36}>
                  <svg width="11" height="17" viewBox="0 0 11 17">
                    <rect x=".5" y=".5" width="10" height="16" rx="1" fill="none" stroke="#555" />
                    <path d="M5 14h1" stroke="#555" />
                  </svg>
                </ViewButton>
                <PagerArrows>
                  <span>◀</span>
                  <span>▶</span>
                </PagerArrows>
                <PageTab>Page 1</PageTab>
                <AddPage>+</AddPage>
              </PageBar>
            </CanvasColumn>

            <FilterStrip>
              <ChevronsLeft size={16} strokeWidth={1.3} />
              <FilterGap />
              <SideFunnel />
              <FilterWord>Filters</FilterWord>
            </FilterStrip>

            <VizPane>
              <PaneHeader>
                Visualizations
                <ChevronsRight size={16} strokeWidth={1.3} />
              </PaneHeader>
              <FormatCaption>Format visual</FormatCaption>
              <ModeRow>
                <ModeButton><FieldsGridIcon /></ModeButton>
                <ModeButton $active><FormatPaintIcon /></ModeButton>
                <ModeButton><AnalyticsIcon /></ModeButton>
              </ModeRow>
              <Notched />
              <SearchBox>
                <MirroredSearch size={11} strokeWidth={1} />
                Search
              </SearchBox>
              <SubTabs>
                <SubTab $active>Visual</SubTab>
                <SubTab>General</SubTab>
                <SubMore><Ellipsis size={13} strokeWidth={1.4} /></SubMore>
              </SubTabs>
              <SectionRow $height={16} $top={15}>
                <ChevronDown size={11} strokeWidth={1.4} />
                <SectionLabel>Legend</SectionLabel>
                <Toggle>On</Toggle>
              </SectionRow>
              <SectionArea>
                <Card $height={70}>
                  <CardHeader><ChevronDown size={10} strokeWidth={1.4} />Options</CardHeader>
                  <CardLabel $top={11}>Position</CardLabel>
                  <Control $top={3}>Bottom center <ChevronDown size={12} strokeWidth={1} /></Control>
                </Card>
                <Card $height={143}>
                  <CardHeader $top={5}><ChevronDown size={10} strokeWidth={1.4} />Text</CardHeader>
                  <CardLabel $top={11}>Font</CardLabel>
                  <ControlRow $top={3}>
                    <Control $width={74}>Segoe UI <ChevronDown size={12} strokeWidth={1} /></Control>
                    <Control $width={45}>
                      10
                      <SpinArrows>
                        <ChevronUp size={7} />
                        <ChevronDown size={7} />
                      </SpinArrows>
                    </Control>
                  </ControlRow>
                  <ControlRow $top={4}>
                    <StyleButton><b>B</b></StyleButton>
                    <StyleButton $active><i>I</i></StyleButton>
                    <StyleButton><u>U</u></StyleButton>
                  </ControlRow>
                  <CardLabel $top={11}>Color</CardLabel>
                  <ControlRow $top={4}>
                    <Control $width={43} $swatch><Swatch /><ChevronDown size={12} strokeWidth={1} /></Control>
                    <StyleButton><FxMark>fx</FxMark></StyleButton>
                  </ControlRow>
                </Card>
                <Card $height={75}>
                  <TitleHeader $top={5}>
                    <TitleLabel>
                      <ChevronDown size={10} strokeWidth={1.4} />Title
                    </TitleLabel>
                    <Toggle>On</Toggle>
                  </TitleHeader>
                  <CardLabel $top={10}>Title text</CardLabel>
                  <Control $top={3} $tall>Age group</Control>
                </Card>
                <ResetRow><ResetGlyph />Reset to default</ResetRow>
              </SectionArea>
              <SectionRow $height={33} $line>
                <ChevronRight size={12} strokeWidth={1.4} />
                <SectionLabel>Slices</SectionLabel>
              </SectionRow>
              <SectionRow $height={34}>
                <ChevronRight size={12} strokeWidth={1.4} />
                <SectionLabel>Detail labels</SectionLabel>
                <Toggle>On</Toggle>
              </SectionRow>
              <Scrollbar />
              <HandCursor><Hand /></HandCursor>
            </VizPane>

            <DataPane>
              <DataHeader>
                Data
                <ChevronsRight size={16} strokeWidth={1.3} />
              </DataHeader>
              <DataSearch>
                <Search size={12} strokeWidth={1} />
                Search
              </DataSearch>
              <DataTree />
            </DataPane>
          </Middle>

          <StatusBar>
            <StatusText>Page 1 of 1</StatusText>
            <span>-</span>
            <ZoomTrack><ZoomThumb /></ZoomTrack>
            <span>+</span>
            <ZoomValue>86%</ZoomValue>
            <svg width="14" height="11" viewBox="0 0 14 11">
              <rect x=".5" y=".5" width="13" height="10" fill="#bbb" stroke="#666" />
              <rect x="2.500" y="2" width="9" height="7" rx="2" fill="#f3f2f1" />
            </svg>
          </StatusBar>
        </Main>
      </Screen>
    </>
  );
}
